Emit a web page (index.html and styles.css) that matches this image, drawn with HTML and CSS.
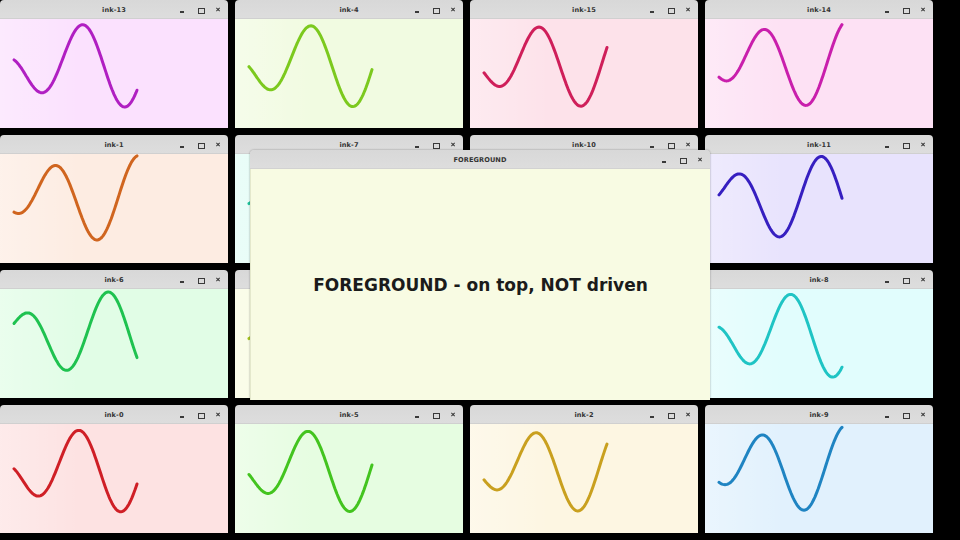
FILE: index.html
```html
<!DOCTYPE html>
<html lang="en">
    <head>
        <meta charset="utf-8" />
        <meta name="viewport" content="width=device-width, initial-scale=1" />
        <title>ink windows</title>
        <link rel="stylesheet" href="styles.css">
    </head>
    <body>
        <main class="desktop" id="desktop">
            <!-- the ink windows are added here by the script -->
        </main>

        <section class="win win-front">
            <div class="titlebar">
                <span></span>
                <span class="title">FOREGROUND</span>
                <span class="buttons">
                    <i class="btn btn-min"></i>
                    <i class="btn btn-max"></i>
                    <svg class="btn btn-close" viewBox="0 0 6 6"><path d="M1 1L5 5M5 1L1 5" /></svg>
                </span>
            </div>
            <div class="front-body">
                <p>FOREGROUND - on top, NOT driven</p>
            </div>
        </section>

        <script>
            // one window per ink, in the order they sit on screen
            // peak = x where the wave reaches its top
            // covered = window sits fully under the foreground, title not drawn
            const inks = [
                {name:"ink-13", ink:"#b01fc2", bg:"#fbe1fe", peak:82},
                {name:"ink-4",  ink:"#7cc91e", bg:"#f1fbe1", peak:75},
                {name:"ink-15", ink:"#cf1f5a", bg:"#fde2ea", peak:68},
                {name:"ink-14", ink:"#c91fac", bg:"#fde1f4", peak:58},
                {name:"ink-1",  ink:"#d0651f", bg:"#fdece2", peak:54},
                {name:"ink-7",  ink:"#1fc49c", bg:"#e1fcf5", peak:40},
                {name:"ink-10", ink:"#7a1fcd", bg:"#f0e2fd", peak:40},
                {name:"ink-11", ink:"#361fc0", bg:"#e8e3fd", peak:31},
                {name:"ink-6",  ink:"#1fc250", bg:"#e1fde6", peak:23},
                {name:"ink-3",  ink:"#a6c41f", bg:"#f8fbe1", peak:40, covered:true},
                {name:"ink-12", ink:"#1f5fc4", bg:"#e2e9fd", peak:40, covered:true},
                {name:"ink-8",  ink:"#1fc4c4", bg:"#e1fdfd", peak:85},
                {name:"ink-0",  ink:"#cf1f26", bg:"#fde2e2", peak:78},
                {name:"ink-5",  ink:"#43c41f", bg:"#e6fde1", peak:72},
                {name:"ink-2",  ink:"#c9a01f", bg:"#fdf6e2", peak:65},
                {name:"ink-9",  ink:"#1f84c2", bg:"#e1f1fd", peak:56}
            ];

            const desktop = document.querySelector("#desktop");

            // the wave grows from the left edge until it is fully developed
            function wave(peak) {
                let pts = "";
                for (let x = 14; x <= 137; x++) {
                    const amp = 45 * (1 - Math.exp(-x / 40));
                    const y = 45 - amp * Math.cos(2 * Math.PI * (x - peak) / 85);
                    pts += x + "," + y.toFixed(1) + " ";
                }
                return pts;
            }

            inks.forEach((d) => {
                desktop.innerHTML += `<section class="win">
                    <div class="titlebar">
                        <span></span>
                        <span class="title">${d.covered ? "" : d.name}</span>
                        <span class="buttons">
                            <i class="btn btn-min"></i>
                            <i class="btn btn-max"></i>
                            <svg class="btn btn-close" viewBox="0 0 6 6"><path d="M1 1L5 5M5 1L1 5" /></svg>
                        </span>
                    </div>
                    <div class="body" style="background-color:${d.bg}">
                        <svg viewBox="0 0 228 109">
                            <polyline points="${wave(d.peak)}" fill="none" stroke="${d.ink}" stroke-width="3" stroke-linecap="round" stroke-linejoin="round"/>
                        </svg>
                    </div>
                </section>`;
            });
        </script>
    </body>
</html>
```

FILE: styles.css
```css
*{ margin:0; padding:0; box-sizing:border-box; }
html, body{ width:960px; height:540px; overflow:hidden; }
body{ background:#000; 
    font-family: "DejaVu Sans", "Liberation Sans", sans-serif; 
    position:relative; }

.desktop{ display:grid; 
    grid-template-columns: repeat(4, 228px); 
    grid-auto-rows: 128px; 
    gap:7px; }

.win{ display:flex; 
    flex-direction:column; 
    border-radius:4px 4px 0 0; 
    overflow:hidden; }

.titlebar{ height:19px; 
    flex:none; 
    display:grid; 
    grid-template-columns: 1fr auto 1fr; 
    align-items:center; 
    background:linear-gradient(#d8d8d8, #dddddd); 
    border-bottom:1px solid #d0d0d0; 
    color:#333; }
.title{ font-size:6.6px; font-weight:bold; letter-spacing:0.1px; }
.buttons{ justify-self:end; display:flex; padding-right:1px; }
.btn{ width:18px; height:19px; display:block; position:relative; }
.btn-min::after{ content:""; position:absolute; left:7px; top:11px; width:4px; height:1.5px; background:#3a3a3a; }
.btn-max::after{ content:""; position:absolute; left:7px; top:7.5px; width:4.5px; height:4.5px; border:1.5px solid #3a3a3a; }
.btn-close{ padding:7px 6.5px; }
.btn-close path{ stroke:#3a3a3a; stroke-width:1.3; fill:none; }

.body{ flex:1; position:relative; }
.body::before{ content:""; position:absolute; inset:0; 
    background:linear-gradient(to right, rgba(255,255,255,0.3), rgba(255,255,255,0) 35%); }
.body svg{ display:block; width:228px; height:109px; position:relative; }

/* the window that sits over the grid */
.win-front{ position:absolute; left:250px; top:150px; 
    width:460px; height:250px; 
    box-shadow:0 0 2px rgba(0,0,0,0.4); }
.win-front .titlebar{ border-bottom-color:#d2d2d2; }
.front-body{ flex:1; 
    display:flex; 
    align-items:center; 
    justify-content:center; 
    background:#f8fbe3; 
    border-left:1px solid #e4e8cc; }
.front-body p{ font-size:17px; font-weight:bold; color:#1b1b1b; }
```
